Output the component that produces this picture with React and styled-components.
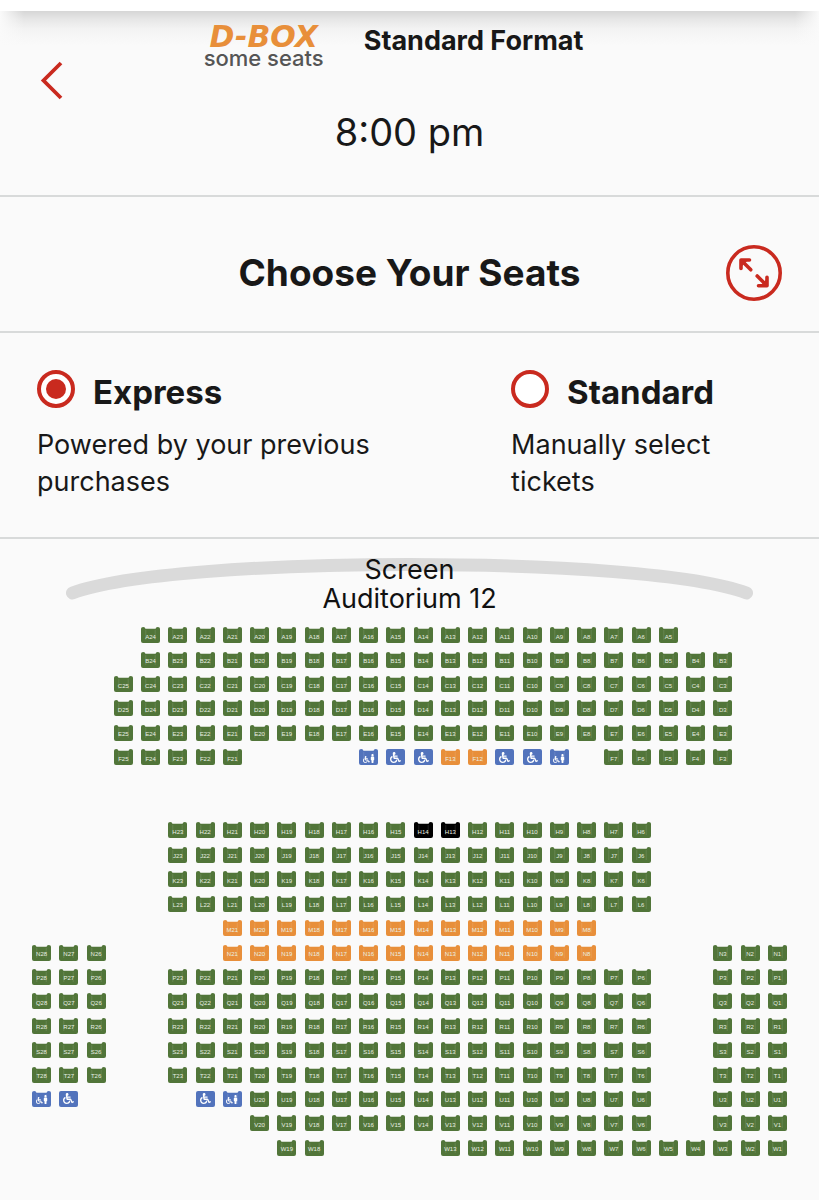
import React, { useState } from "react";
import styled, { createGlobalStyle } from "styled-components";
import { FaWheelchair, FaMale } from "react-icons/fa";

const color = {
  page: "#fafafa",
  text: "#181818",
  red: "#c92a1f",
  line: "#d8dada",
  green: "#517539",
  orange: "#e88f3a",
  blue: "#5273bc",
  black: "#000000",
};

const GlobalStyle = createGlobalStyle`
  *, *::before, *::after { box-sizing: border-box; }
  body {
    margin: 0;
    background: ${color.page};
    color: ${color.text};
    font-family: Inter, "Liberation Sans", sans-serif;
  }
`;

const Page = styled.main`
  min-height: 100vh;
  overflow-x: hidden;
`;

const TopBar = styled.div`
  height: 11px;
  background: #ffffff;
`;

const ShowHeader = styled.header`
  display: grid;
  grid-template-columns: 64px 1fr 64px;
  height: 186px;
  padding-top: 11px;
  border-bottom: 2px solid ${color.line};
  background:
    linear-gradient(90deg, ${color.page}, transparent 24px, transparent calc(100% - 24px), ${color.page}),
    linear-gradient(180deg, #d6d6d6, #e6e6e6 8px, #f3f3f3 18px, ${color.page} 34px);
`;

const BackButton = styled.button`
  align-self: start;
  justify-self: end;
  display: flex;
  margin-top: 38px;
  padding: 0;
  border: 0;
  background: none;
  color: ${color.red};
  cursor: pointer;
`;

const ShowDetails = styled.div`
  display: flex;
  flex-direction: column;
  align-items: center;
`;

const Formats = styled.ul`
  display: flex;
  align-items: flex-start;
  gap: 40px;
  margin: 0;
  padding: 0 32px 0 0;
  list-style: none;
`;

const DboxFormat = styled.li`
  display: flex;
  flex-direction: column;
  align-items: center;
  color: #555555;
  font-size: 22px;
  font-weight: 500;
  line-height: 12px;
`;

const DboxLogo = styled.span`
  color: ${color.orange};
  font-family: "DejaVu Sans", sans-serif;
  font-size: 30px;
  font-style: italic;
  font-weight: 700;
  line-height: 30px;
`;

const FormatName = styled.li`
  padding-top: 4px;
  font-size: 27px;
  font-weight: 700;
  line-height: 30px;
`;

const Showtime = styled.time`
  margin-top: 46px;
  font-size: 38px;
  line-height: 44px;
`;

const TitleBar = styled.div`
  display: grid;
  grid-template-columns: 56px 1fr 56px;
  align-items: center;
  height: 136px;
  padding: 18px 37px 0;
  border-bottom: 2px solid ${color.line};
`;

const Title = styled.h1`
  grid-column: 2;
  margin: 0;
  font-size: 37px;
  font-weight: 700;
  line-height: 44px;
  text-align: center;
`;

const ExpandButton = styled.button`
  display: flex;
  width: 56px;
  height: 56px;
  padding: 0;
  border: 0;
  background: none;
  color: ${color.red};
  cursor: pointer;
`;

const Modes = styled.fieldset`
  display: grid;
  grid-template-columns: 7fr 4fr;
  min-width: 0;
  margin: 0;
  padding: 37px 37px 37px;
  border: 0;
  border-bottom: 2px solid ${color.line};
`;

const Mode = styled.label`
  display: grid;
  grid-template-columns: 38px 1fr;
  column-gap: 18px;
  align-content: start;
  cursor: pointer;
`;

const Radio = styled.input`
  appearance: none;
  display: grid;
  place-items: center;
  width: 38px;
  height: 38px;
  margin: 0;
  border: 4px solid ${color.red};
  border-radius: 50%;
  background: #ffffff;

  &:checked::before {
    content: "";
    width: 20px;
    height: 20px;
    border-radius: 50%;
    background: ${color.red};
  }
`;

const ModeName = styled.span`
  padding-top: 2px;
  font-size: 33px;
  font-weight: 700;
  line-height: 40px;
`;

const ModeText = styled.span`
  grid-column: 1 / -1;
  padding: 14px 32px 0 0;
  font-size: 27px;
  line-height: 37px;
`;

const SeatMap = styled.section`
  padding: 14px 28px 32px;
`;

const ScreenArea = styled.div`
  display: grid;
  align-items: start;
`;

const ScreenArc = styled.svg`
  grid-area: 1 / 1;
  width: 100%;
`;

const ScreenLabel = styled.p`
  grid-area: 1 / 1;
  margin: 0;
  padding-top: 2px;
  color: #111111;
  font-size: 27px;
  line-height: 29px;
  text-align: center;
`;

const Seats = styled.div`
  display: grid;
  grid-template-columns: repeat(28, 1fr);
  grid-template-rows: repeat(22, 1fr);
  place-items: center;
  aspect-ratio: 763 / 537;
  margin-top: 10px;
`;

const SeatButton = styled.button`
  grid-column: ${(p) => 29 - p.$number};
  grid-row: ${(p) => p.$row};
  display: grid;
  width: 19px;
  height: 16px;
  padding: 0;
  border: 0;
  background: none;
  color: ${(p) => color[p.$tone]};
  cursor: pointer;
`;

const SeatShape = styled.svg`
  grid-area: 1 / 1;
  display: block;
`;

const SeatFace = styled.span`
  grid-area: 1 / 1;
  z-index: 1;
  display: flex;
  align-items: center;
  justify-content: center;
  padding-top: ${(p) => (p.$full ? 0 : "3px")};
  color: ${(p) => (p.$icon ? "#ffffff" : "#e9efe4")};
  font-size: 6px;
  line-height: 8px;
`;

function Chair({ full }) {
  return (
    <SeatShape width="19" height="16" viewBox="0 0 19 16" aria-hidden="true">
      {full ? (
        <rect width="19" height="16" rx="2" fill="currentColor" />
      ) : (
        <>
          <path
            d="M0 1.800A2.200 1.800 0 0 1 4.400 1.800H14.600A2.200 1.800 0 0 1 19 1.800V14a2 2 0 0 1-2 2H2a2 2 0 0 1-2-2Z"
            fill="currentColor"
          />
          <path d="M4.800 3V13M14.200 3V13" stroke="#fff" strokeOpacity="0.2" strokeWidth="0.6" />
        </>
      )}
    </SeatShape>
  );
}

function Seat({ letter, row, number, kind }) {
  const tone = { dbox: "orange", taken: "black", wheelchair: "blue", companion: "blue" }[kind] || "green";
  const full = kind === "wheelchair";
  const icon = full || kind === "companion";
  return (
    <SeatButton type="button" $row={row} $number={number} $tone={tone} aria-label={`${letter}${number}`}>
      <Chair full={full} />
      <SeatFace $full={full} $icon={icon}>
        {kind === "wheelchair" && <FaWheelchair size={11} />}
        {kind === "companion" && (
          <svg width="12" height="10" viewBox="0 0 12 10" aria-hidden="true">
            <FaWheelchair x="0" y="2" size={7} />
            <FaMale x="5" y="0" size={9} />
          </svg>
        )}
        {!icon && `${letter}${number}`}
      </SeatFace>
    </SeatButton>
  );
}

// Each block is [highest seat number, lowest seat number, kind]
const rows = [
  { letter: "A", row: 1, blocks: [[24, 5]] },
  { letter: "B", row: 2, blocks: [[24, 3]] },
  { letter: "C", row: 3, blocks: [[25, 3]] },
  { letter: "D", row: 4, blocks: [[25, 3]] },
  { letter: "E", row: 5, blocks: [[25, 3]] },
  {
    letter: "F",
    row: 6,
    blocks: [
      [25, 21],
      [16, 16, "companion"],
      [15, 14, "wheelchair"],
      [13, 12, "dbox"],
      [11, 10, "wheelchair"],
      [9, 9, "companion"],
      [7, 3],
    ],
  },
  { letter: "H", row: 9, blocks: [[23, 15], [14, 13, "taken"], [12, 6]] },
  { letter: "J", row: 10, blocks: [[23, 6]] },
  { letter: "K", row: 11, blocks: [[23, 6]] },
  { letter: "L", row: 12, blocks: [[23, 6]] },
  { letter: "M", row: 13, blocks: [[21, 8, "dbox"]] },
  { letter: "N", row: 14, blocks: [[28, 26], [21, 8, "dbox"], [3, 1]] },
  { letter: "P", row: 15, blocks: [[28, 26], [23, 6], [3, 1]] },
  { letter: "Q", row: 16, blocks: [[28, 26], [23, 6], [3, 1]] },
  { letter: "R", row: 17, blocks: [[28, 26], [23, 6], [3, 1]] },
  { letter: "S", row: 18, blocks: [[28, 26], [23, 6], [3, 1]] },
  { letter: "T", row: 19, blocks: [[28, 26], [23, 6], [3, 1]] },
  {
    letter: "U",
    row: 20,
    blocks: [
      [28, 28, "companion"],
      [27, 27, "wheelchair"],
      [22, 22, "wheelchair"],
      [21, 21, "companion"],
      [20, 6],
      [3, 1],
    ],
  },
  { letter: "V", row: 21, blocks: [[20, 6], [3, 1]] },
  { letter: "W", row: 22, blocks: [[19, 18], [13, 1]] },
];

const seats = rows.flatMap(({ letter, row, blocks }) =>
  blocks.flatMap(([from, to, kind]) =>
    Array.from({ length: from - to + 1 }, (_, i) => ({ letter, row, number: from - i, kind }))
  )
);

const modes = [
  { id: "express", name: "Express", text: "Powered by your previous purchases" },
  { id: "standard", name: "Standard", text: "Manually select tickets" },
];

export default function App() {
  const [mode, setMode] = useState("express");
  return (
    <>
      <GlobalStyle />
      <Page>
        <TopBar />
        <ShowHeader>
          <BackButton type="button" aria-label="Back">
            <svg width="24" height="40" viewBox="0 0 24 40" fill="none" stroke="currentColor" strokeWidth="3.8">
              <path d="M21 3 3.500 20.500 21 38" />
            </svg>
          </BackButton>
          <ShowDetails>
            <Formats>
              <DboxFormat>
                <DboxLogo>D-BOX</DboxLogo>
                some seats
              </DboxFormat>
              <FormatName>Standard Format</FormatName>
            </Formats>
            <Showtime dateTime="20:00">8:00 pm</Showtime>
          </ShowDetails>
        </ShowHeader>

        <TitleBar>
          <Title>Choose Your Seats</Title>
          <ExpandButton type="button" aria-label="Expand seat map">
            <svg width="56" height="56" viewBox="0 0 56 56" fill="none" stroke="currentColor" strokeWidth="3.6">
              <circle cx="28" cy="28" r="26.200" />
              <g strokeWidth="3.6" strokeLinejoin="round" strokeLinecap="round">
                <path d="M15 23.500V15H23.500M16 16 24.800 24.800" />
                <path d="M32.500 40.800H41V32.300M40 39.800 31.200 31" />
              </g>
              <path d="M15 15h7l-7 7zM41 40.800h-7l7-7z" fill="currentColor" stroke="none" />
            </svg>
          </ExpandButton>
        </TitleBar>

        <Modes aria-label="Seat selection mode">
          {modes.map((m) => (
            <Mode key={m.id}>
              <Radio type="radio" name="mode" checked={mode === m.id} onChange={() => setMode(m.id)} />
              <ModeName>{m.name}</ModeName>
              <ModeText>{m.text}</ModeText>
            </Mode>
          ))}
        </Modes>

        <SeatMap aria-label="Seat map">
          <ScreenArea>
            <ScreenArc viewBox="0 0 763 54" aria-hidden="true">
              <path
                d="M44.500 40C145 2 619 2 718.500 40"
                fill="none"
                stroke="#dadada"
                strokeWidth="13"
                strokeLinecap="round"
              />
            </ScreenArc>
            <ScreenLabel>
              Screen
              <br />
              Auditorium 12
            </ScreenLabel>
          </ScreenArea>
          <Seats>
            {seats.map((s) => (
              <Seat key={`${s.letter}${s.number}`} {...s} />
            ))}
          </Seats>
        </SeatMap>
      </Page>
    </>
  );
}
